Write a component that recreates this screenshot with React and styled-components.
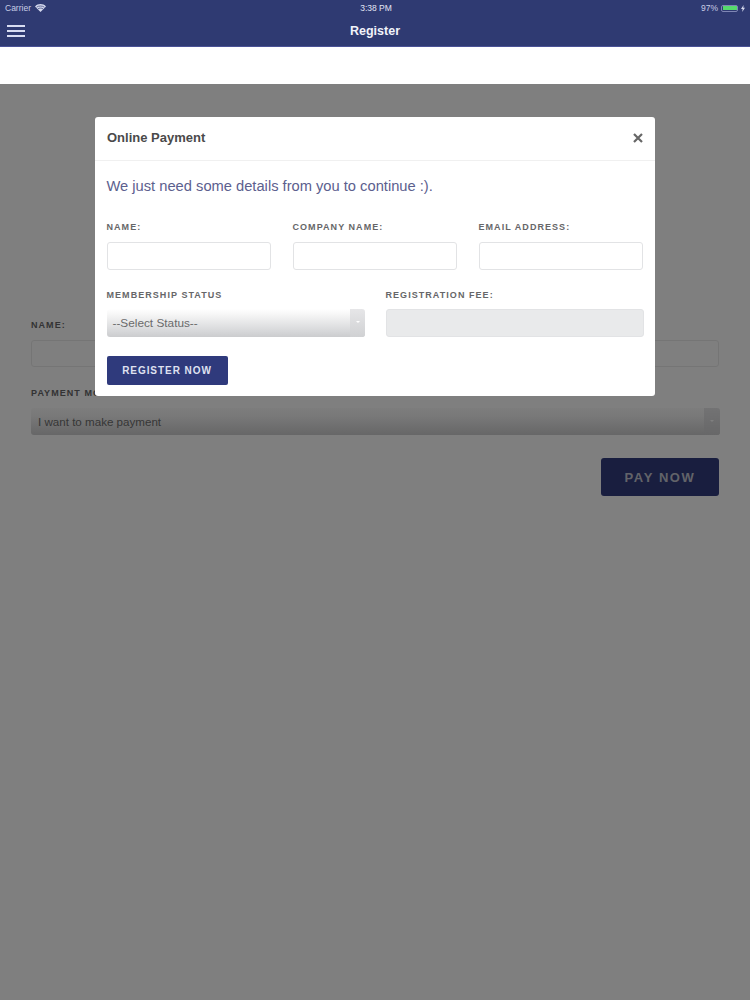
import React from "react";
import styled, { createGlobalStyle } from "styled-components";

const GlobalStyle = createGlobalStyle`
  * {
    box-sizing: border-box;
  }

  body {
    margin: 0;
    background: #fff;
    font-family: "Liberation Sans", Arial, sans-serif;
  }
`;

const App = () => {
  return (
    <Page>
      <GlobalStyle />
      <TopBar>
        <StatusBar>
          <Carrier>
            Carrier
            <svg width="11" height="8" viewBox="0 0 11 8">
              <path d="M5.5 8 L0 2.4 C3 -0.8 8 -0.8 11 2.4 Z" fill="#d5d9ee" />
              <path d="M1.6 3.2 C3.6 1.6 7.4 1.6 9.4 3.2 M3 4.8 C4.3 3.9 6.7 3.9 8 4.8" stroke="#2f3a72" strokeWidth="0.7" fill="none" />
            </svg>
          </Carrier>
          <Clock>3:38 PM</Clock>
          <Power>
            97%
            <Battery>
              <BatteryLevel />
            </Battery>
            <svg width="4" height="7" viewBox="0 0 4 7">
              <path d="M2.6 0 L0 4 H1.6 L1.2 7 L4 2.8 H2.3 Z" fill="#d5d9ee" />
            </svg>
          </Power>
        </StatusBar>
        <NavBar>
          <MenuButton>
            <span />
            <span />
            <span />
          </MenuButton>
          <NavTitle>Register</NavTitle>
        </NavBar>
      </TopBar>
      <WhiteStrip />
      <PageForm>
        <Label>Name:</Label>
        <PageInput />
        <PageLabel>Payment Mode:</PageLabel>
        <PageSelect>
          I want to make payment
          <PageArrow />
        </PageSelect>
        <PayRow>
          <PayButton>Pay Now</PayButton>
        </PayRow>
      </PageForm>
      <Overlay>
        <Modal>
          <ModalHeader>
            <ModalTitle>Online Payment</ModalTitle>
            <CloseIcon width="10" height="10" viewBox="0 0 10 10">
              <path d="M1 1 L9 9 M9 1 L1 9" stroke="#666" strokeWidth="2.2" />
            </CloseIcon>
          </ModalHeader>
          <ModalBody>
            <Intro>We just need some details from you to continue :).</Intro>
            <ThreeCols>
              <Field>
                <Label>Name:</Label>
                <Input />
              </Field>
              <Field>
                <Label>Company Name:</Label>
                <Input />
              </Field>
              <Field>
                <Label>Email Address:</Label>
                <Input />
              </Field>
            </ThreeCols>
            <TwoCols>
              <Field>
                <Label>Membership Status</Label>
                <SelectBox>
                  --Select Status--
                  <SelectArrow />
                </SelectBox>
              </Field>
              <Field>
                <Label>Registration Fee:</Label>
                <Input disabled />
              </Field>
            </TwoCols>
            <RegisterButton>Register Now</RegisterButton>
          </ModalBody>
        </Modal>
      </Overlay>
    </Page>
  );
};

const Page = styled.div`
  position: relative;
  width: 750px;
  height: 1000px;
  overflow: hidden;
  background: #fff;
`;

const TopBar = styled.header`
  height: 47px;
  background: #2f3a72;
  border-bottom: 1px solid #4a5296;
`;

const StatusBar = styled.div`
  height: 16px;
  padding: 0 5px;
  display: grid;
  grid-template-columns: 1fr auto 1fr;
  align-items: center;
  font-size: 8.5px;
  color: #c9cde6;
`;

const Carrier = styled.div`
  display: flex;
  align-items: center;
  gap: 4px;
`;

const Clock = styled.div`
  color: #e4e6f4;
  margin-left: 2px;
`;

const Power = styled.div`
  display: flex;
  align-items: center;
  justify-content: flex-end;
  gap: 3px;
`;

const Battery = styled.div`
  width: 17px;
  height: 7px;
  padding: 0.5px;
  border: 1px solid #7f86b4;
  border-radius: 2px;
`;

const BatteryLevel = styled.div`
  height: 100%;
  background: #55d96c;
`;

const NavBar = styled.div`
  position: relative;
  height: 30px;
  display: flex;
  align-items: center;
  justify-content: center;
`;

const MenuButton = styled.div`
  position: absolute;
  left: 7px;
  top: 9px;
  width: 18px;
  display: flex;
  flex-direction: column;
  gap: 3px;

  span {
    height: 2px;
    background: #d8dcf2;
  }
`;

const NavTitle = styled.div`
  font-size: 12.5px;
  font-weight: 700;
  color: #f2f3fa;
`;

const WhiteStrip = styled.div`
  height: 37px;
  background: #fff;
`;

const PageForm = styled.main`
  padding: 236px 31px 0 31px;
`;

const Label = styled.label`
  display: block;
  font-size: 9px;
  line-height: 11px;
  font-weight: 700;
  letter-spacing: 1.05px;
  text-transform: uppercase;
  color: #666668;
  margin-bottom: 9px;
`;

const PageInput = styled.input`
  display: block;
  width: 100%;
  height: 27px;
  background: #fff;
  border: 1px solid #ebebeb;
  border-radius: 3px;
`;

const PageLabel = styled(Label)`
  margin-top: 21px;
`;

const PageSelect = styled.div`
  position: relative;
  height: 27px;
  margin-right: -1px;
  padding-left: 7px;
  display: flex;
  align-items: center;
  font-size: 11.6px;
  color: #6e6e6e;
  background: linear-gradient(#fafafa 0%, #f2f2f2 30%, #cdcdcf 100%);
  border-radius: 3px;
`;

const PageArrow = styled.div`
  position: absolute;
  right: 0;
  top: 0;
  bottom: 0;
  width: 16px;
  background: linear-gradient(#e6e6e8, #cfcfd1);
  border-radius: 0 3px 3px 0;

  &::after {
    content: "";
    position: absolute;
    left: 6px;
    top: 12px;
    border: 2px solid transparent;
    border-top-color: #fff;
  }
`;

const PayRow = styled.div`
  display: flex;
  justify-content: flex-end;
  margin-top: 23px;
`;

const PayButton = styled.button`
  width: 118px;
  height: 38px;
  background: #323c7e;
  border: none;
  border-radius: 3px;
  font-family: inherit;
  font-size: 13px;
  font-weight: 700;
  letter-spacing: 1.6px;
  text-transform: uppercase;
  color: #c4c6d2;
`;

const Overlay = styled.div`
  position: absolute;
  left: 0;
  right: 0;
  top: 84px;
  bottom: 0;
  padding-top: 33px;
  background: rgba(0, 0, 0, 0.5);
`;

const Modal = styled.section`
  width: 560px;
  height: 279px;
  margin: 0 auto;
  background: #fff;
  border-radius: 3px;
`;

const ModalHeader = styled.div`
  height: 44px;
  padding: 0 12px 2px 12px;
  display: flex;
  align-items: center;
  justify-content: space-between;
  border-bottom: 1px solid #f0f0f0;
`;

const ModalTitle = styled.h4`
  margin: 0;
  font-size: 13px;
  font-weight: 700;
  color: #4a4a4a;
`;

const CloseIcon = styled.svg`
  display: block;
`;

const ModalBody = styled.div`
  padding: 15px 11.5px 0 11.5px;
`;

const Intro = styled.p`
  margin: 0 0 26px 0;
  font-size: 14.7px;
  line-height: 20px;
  color: #5c608e;
`;

const ThreeCols = styled.div`
  display: grid;
  grid-template-columns: repeat(3, 164px);
  gap: 22px;
`;

const TwoCols = styled.div`
  display: grid;
  grid-template-columns: repeat(2, 258px);
  gap: 21px;
  margin-top: 20px;

  ${Label} {
    margin-bottom: 8px;
  }
`;

const Field = styled.div`
  min-width: 0;
`;

const Input = styled.input`
  display: block;
  width: 100%;
  height: 28px;
  background: ${(props) => (props.disabled ? "#e9eaeb" : "#fff")};
  border: 1px solid #e2e3e5;
  border-radius: 3px;
`;

const SelectBox = styled.div`
  position: relative;
  height: 28px;
  padding-left: 6px;
  display: flex;
  align-items: center;
  font-size: 11.8px;
  color: #6a6a6a;
  background: linear-gradient(#fff 0%, #f6f6f6 20%, #d6d7d9 80%, #cbccce 100%);
  border-radius: 3px;
`;

const SelectArrow = styled.div`
  position: absolute;
  right: 0;
  top: 0;
  bottom: 0;
  width: 15px;
  background: linear-gradient(#e6e6e8, #d0d1d3);
  border-radius: 0 3px 3px 0;

  &::after {
    content: "";
    position: absolute;
    left: 6px;
    top: 12px;
    border: 2px solid transparent;
    border-top-color: #fff;
  }
`;

const RegisterButton = styled.button`
  display: block;
  width: 121px;
  height: 29px;
  margin-top: 19px;
  padding: 0;
  background: #2f3a7c;
  border: none;
  border-radius: 2px;
  font-family: inherit;
  font-size: 10px;
  font-weight: 700;
  letter-spacing: 0.95px;
  text-transform: uppercase;
  color: #dfe1f0;
`;

export default App;
